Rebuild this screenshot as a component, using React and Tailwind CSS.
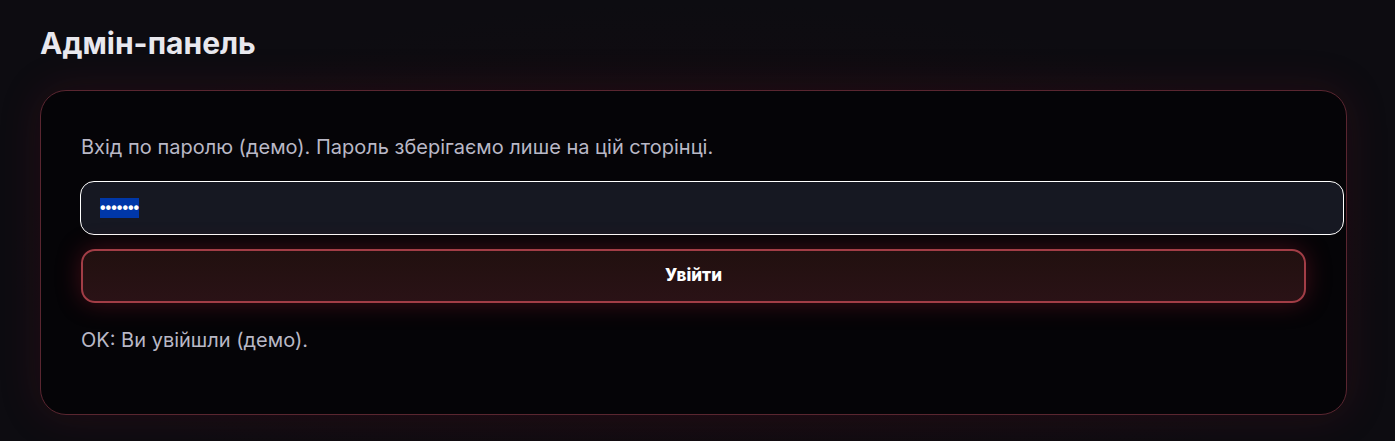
import React from 'react';

const App = () => {
    return (
        <div className="min-h-[441px] bg-[#0d0c11] bg-[radial-gradient(ellipse_at_50%_60%,#170b10_0%,#0d0c11_70%)] pl-10 pr-12 pt-[25px] pb-6 font-['Inter',sans-serif]">
            {/* Header */}
            <h1 className="text-[30px] leading-[36px] font-bold text-[#e8e8ee]">Адмін-панель</h1>

            {/* Login card */}
            <div className="mt-[29px] rounded-[26px] border border-[#5a2630] bg-[#050407] shadow-[0_0_40px_rgba(120,20,35,0.22)] px-10 pt-[42px] pb-[60px]">
                <p className="text-[20px] leading-[28px] text-[#b9b8c6]">
                    Вхід по паролю (демо). Пароль зберігаємо лише на цій сторінці.
                </p>

                {/* Password field (focused, value selected) */}
                <div className="mt-[20px] -ml-px w-[calc(100%+39px)] h-[54px] rounded-[14px] border border-white bg-[#161822] pl-[19px] flex items-center">
                    <span className="inline-block h-[20px] leading-[20px] bg-[#0037a8] text-white text-[16px] font-bold font-['Liberation_Sans',sans-serif]">•••••••</span>
                </div>

                <button className="mt-[14px] block w-full h-[54px] rounded-[14px] border-2 border-[#a23d46] bg-gradient-to-b from-[#21100f] to-[#2a1216] shadow-[0_0_24px_rgba(170,30,45,0.35)] text-[17px] font-extrabold text-white">
                    Увійти
                </button>

                <p className="mt-[23px] text-[20px] leading-[28px] text-[#b9b8c6]">OK: Ви увійшли (демо).</p>
            </div>
        </div>
    );
};

export default App;
